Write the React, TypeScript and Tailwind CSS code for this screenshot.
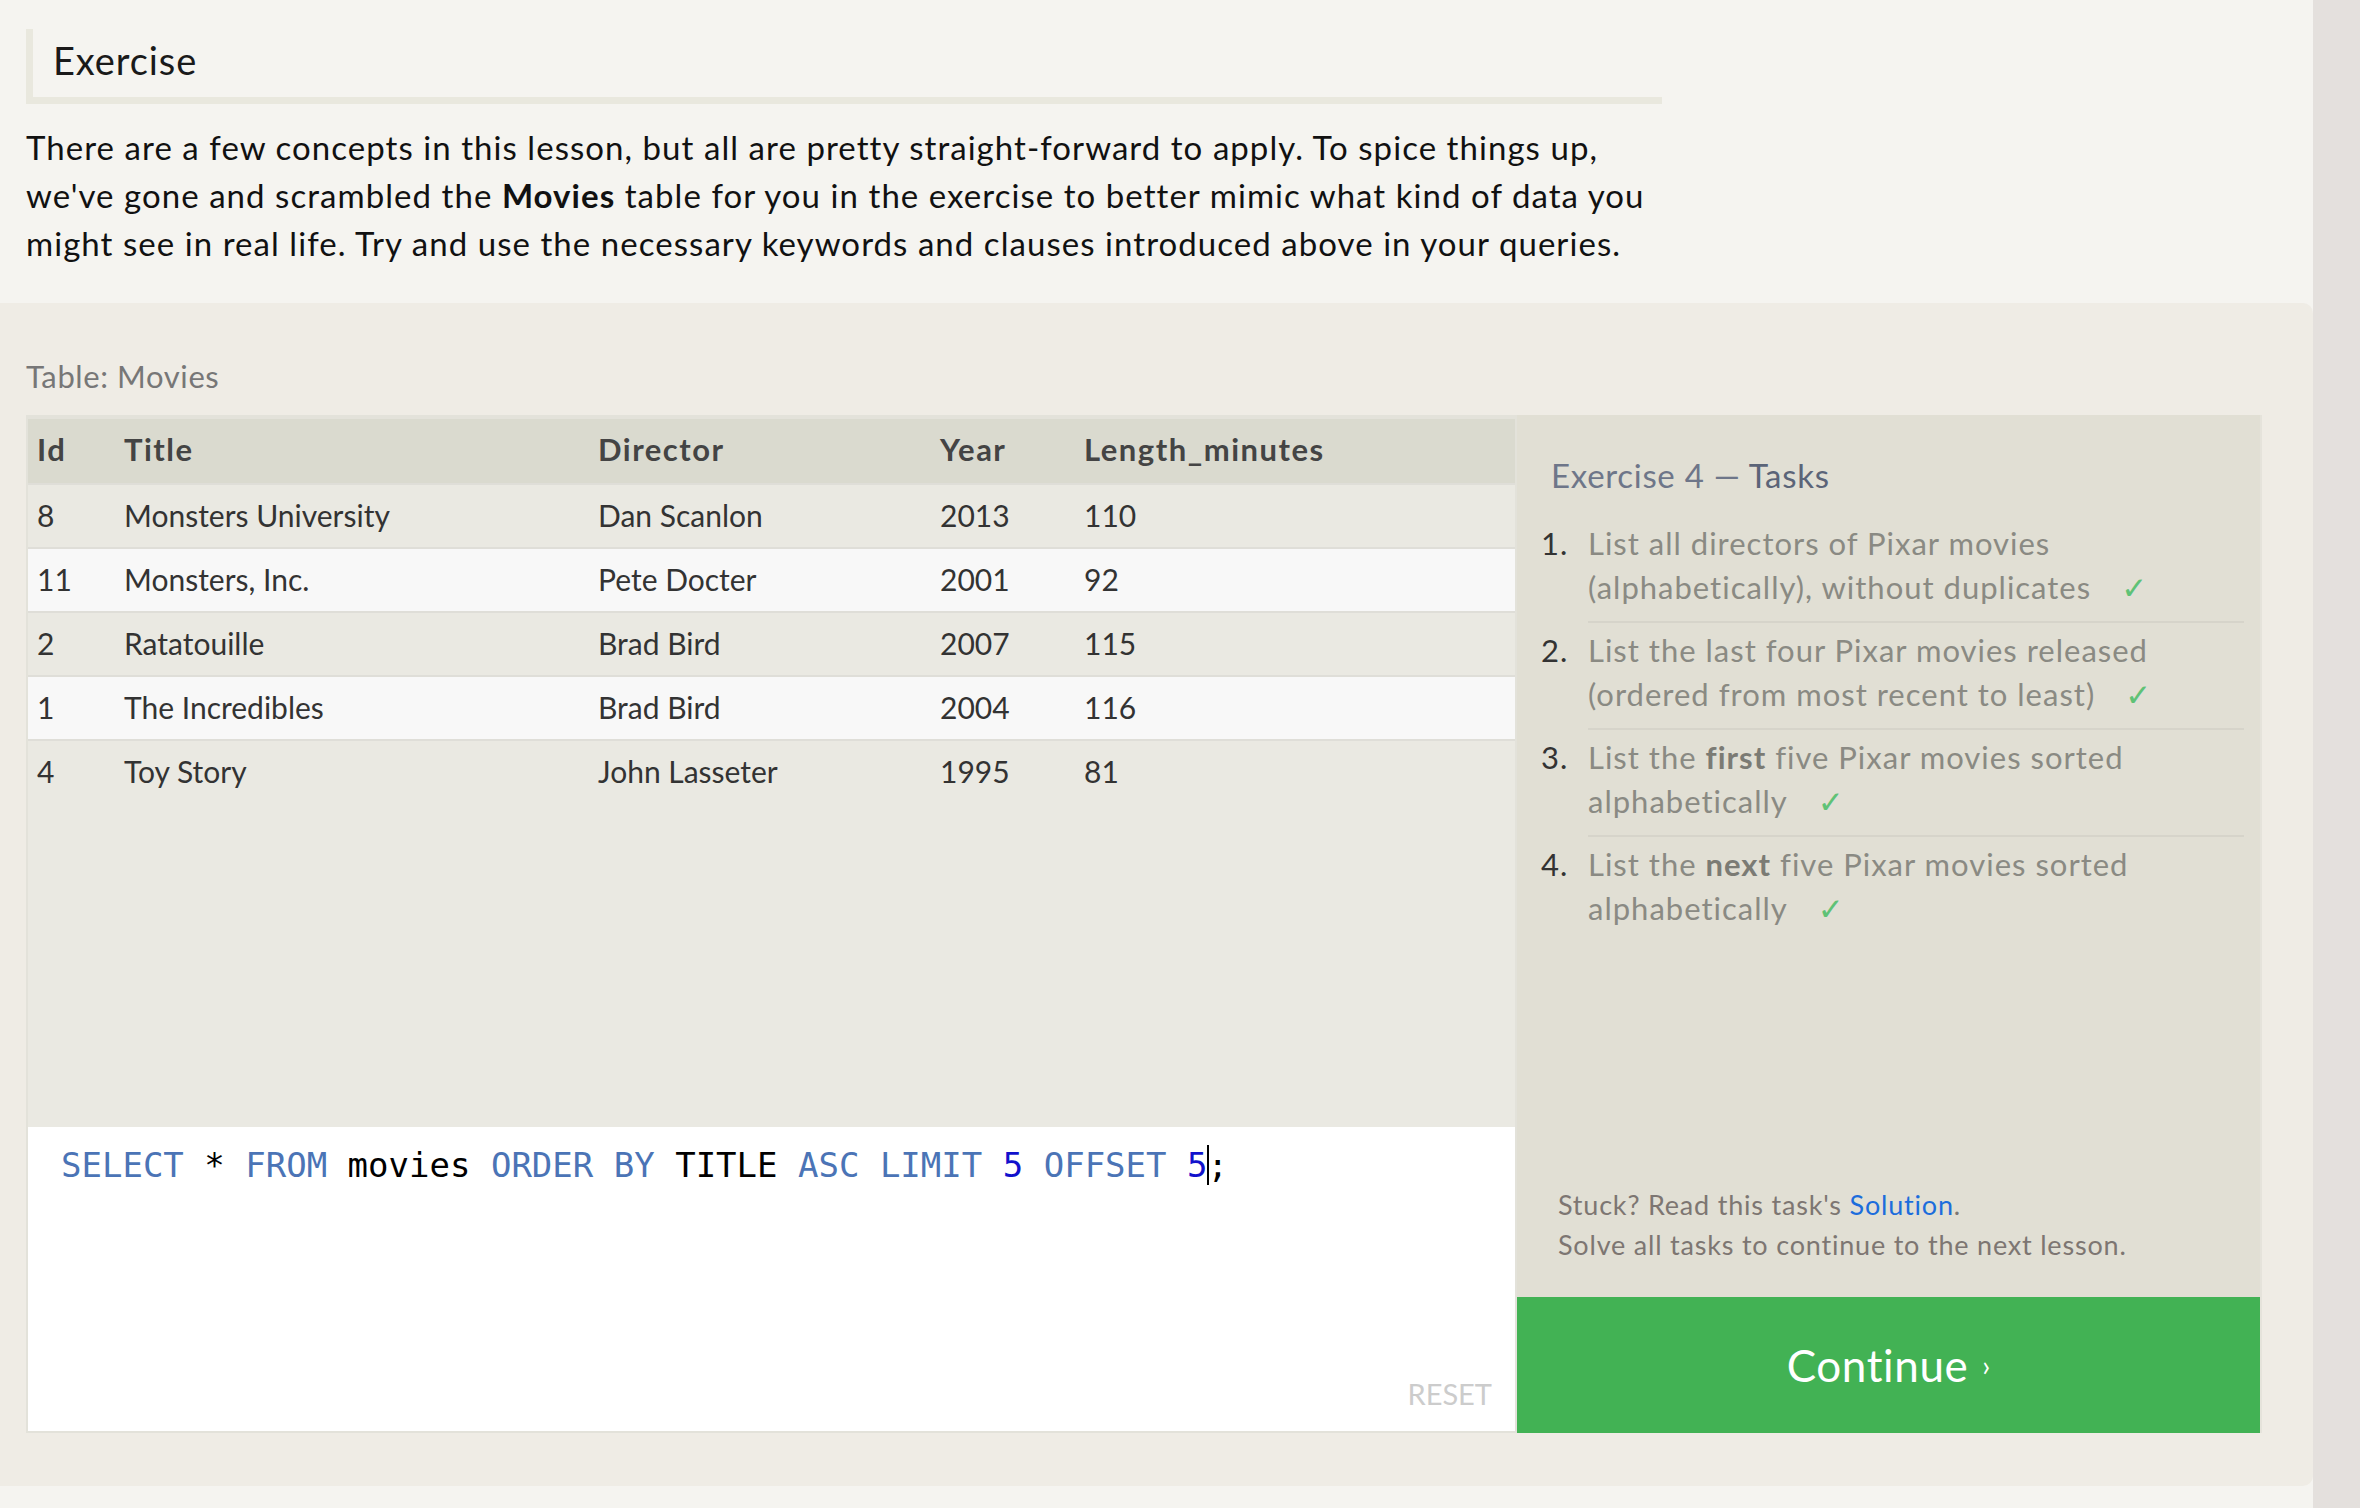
import React from "react";

const rows = [
  ["8", "Monsters University", "Dan Scanlon", "2013", "110"],
  ["11", "Monsters, Inc.", "Pete Docter", "2001", "92"],
  ["2", "Ratatouille", "Brad Bird", "2007", "115"],
  ["1", "The Incredibles", "Brad Bird", "2004", "116"],
  ["4", "Toy Story", "John Lasseter", "1995", "81"],
];

function Check() {
  return <span className="ml-[30px] text-[#5fc276] font-['DejaVu_Sans',sans-serif] tracking-normal">✓</span>;
}

export default function App() {
  return (
    <div className="flex w-[2360px] min-h-[1508px] bg-[#f5f4f0] font-['Lato','Open_Sans',sans-serif]">
      <div className="w-[2313px] flex flex-col">
        {/* Top section */}
        <section className="pt-[29px] pl-[26px] pb-[36px]">
          <div className="w-[1636px] h-[75px] border-l-[7px] border-b-[7px] border-[#e9e8de] pl-[20px] pt-[12px]">
            <h1 className="text-[38px] leading-[38px] tracking-[0.9px] text-[#1a1a1a]">Exercise</h1>
          </div>
          <p className="mt-[19px] text-[33px] leading-[48px] tracking-[1.05px] text-[#111] whitespace-nowrap">
            There are a few concepts in this lesson, but all are pretty straight-forward to apply. To spice things up,
            <br />
            we've gone and scrambled the <b>Movies</b> table for you in the exercise to better mimic what kind of data you
            <br />
            might see in real life. Try and use the necessary keywords and clauses introduced above in your queries.
          </p>
        </section>

        {/* Lower section */}
        <section className="bg-[#efece5] rounded-r-[10px] pt-[55px] pl-[26px] pb-[53px]">
          <div className="text-[31px] leading-[36px] tracking-[0.6px] text-[#777] mb-[21px]">Table: Movies</div>
          <div className="flex h-[1018px]">
            {/* Table + editor */}
            <div className="w-[1491px] flex flex-col border-l-2 border-r-2 border-t-4 border-b-2 border-[#e3e2da] bg-[#eae9e2]">
              <div className="grid grid-cols-[87px_474px_342px_144px_1fr] items-center h-[64px] pl-[9px] pb-[3px] bg-[#dadacf] text-[31px] tracking-[1.5px] font-bold text-[#444]">
                <div>Id</div>
                <div>Title</div>
                <div>Director</div>
                <div>Year</div>
                <div>Length_minutes</div>
              </div>
              {rows.map((r, i) => (
                <div
                  key={i}
                  className={
                    "grid grid-cols-[87px_474px_342px_144px_1fr] items-center h-[64px] pl-[9px] pb-[2px] border-t-2 border-[#dfded8] text-[30px] text-[#333] " +
                    (i % 2 === 1 ? "bg-[#f8f8f8]" : "bg-[#eae9e2]")
                  }
                >
                  {r.map((c, j) => (
                    <div key={j}>{c}</div>
                  ))}
                </div>
              ))}
              <div className="flex-1" />
              <div className="h-[304px] bg-white flex flex-col justify-between pl-[33px] pt-[13px] pr-[23px] pb-[19px]">
                <div className="font-['DejaVu_Sans_Mono',monospace] text-[34px] leading-[51px] whitespace-nowrap text-black">
                  <span className="text-[#4b74b6]">SELECT</span> * <span className="text-[#4b74b6]">FROM</span> movies{" "}
                  <span className="text-[#4b74b6]">ORDER BY</span> TITLE <span className="text-[#4b74b6]">ASC</span>{" "}
                  <span className="text-[#4b74b6]">LIMIT</span> <span className="text-[#1111cc]">5</span>{" "}
                  <span className="text-[#4b74b6]">OFFSET</span> <span className="text-[#1111cc]">5</span>
                  <span className="inline-block w-[2px] h-[40px] -ml-[1px] -mr-[1px] bg-black align-[-8px]" />;
                </div>
                <div className="self-end text-[29px] leading-[36px] text-[#cccccc]">RESET</div>
              </div>
            </div>

            {/* Tasks panel */}
            <div className="w-[745px] flex flex-col bg-[#e1dfd4] border-r-2 border-[#e5e3db]">
              <div className="pt-[40px] pl-[24px] pr-[16px] flex-1">
                <h2 className="pl-[10px] text-[33px] leading-[40px] tracking-[0.7px] text-[#6e7689]">
                  Exercise 4 — <span className="text-[#5b6478]">Tasks</span>
                </h2>
                <ol className="mt-[21px] text-[31px] leading-[44px] tracking-[1px]">
                  {[
                    [<>List all directors of Pixar movies</>, <>(alphabetically), without duplicates</>],
                    [<>List the last four Pixar movies released</>, <>(ordered from most recent to least)</>],
                    [<>List the <b className="text-[#7b7b74]">first</b> five Pixar movies sorted</>, <>alphabetically</>],
                    [<>List the <b className="text-[#7b7b74]">next</b> five Pixar movies sorted</>, <>alphabetically</>],
                  ].map((t, i) => (
                    <li key={i} className="flex">
                      <div className="w-[47px] pt-[5px] text-[#333]">{i + 1}.</div>
                      <div
                        className={
                          "flex-1 pt-[5px] pb-[11px] text-[#8a8a83] whitespace-nowrap " +
                          (i < 3 ? "border-b-2 border-[#d6d4ca]" : "")
                        }
                      >
                        <div>{t[0]}</div>
                        <div>
                          {t[1]}
                          <Check />
                        </div>
                      </div>
                    </li>
                  ))}
                </ol>
              </div>
              <div className="pl-[41px] pb-[32px] text-[27px] leading-[40px] tracking-[0.8px] text-[#7d7672]">
                <div>
                  Stuck? Read this task's <span className="text-[#1c6ddc]">Solution</span>.
                </div>
                <div>Solve all tasks to continue to the next lesson.</div>
              </div>
              <div className="h-[136px] bg-[#42b254] flex items-center justify-center text-white">
                <span className="text-[44px] leading-[44px] tracking-[0.6px]">Continue</span>
                <span className="ml-[14px] text-[28px] leading-[28px]">›</span>
              </div>
            </div>
          </div>
        </section>
      </div>
      <div className="w-[47px] bg-[#e4e0dd]" />
    </div>
  );
}
